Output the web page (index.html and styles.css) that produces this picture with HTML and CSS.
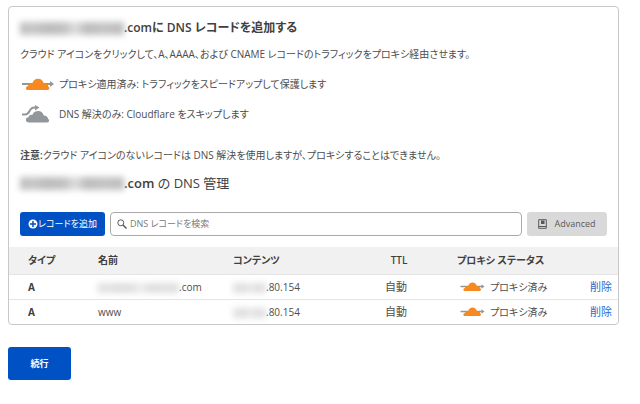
FILE: index.html
```html
<!DOCTYPE html>
<html lang="ja">
<head>
    <meta charset="UTF-8">
    <meta name="viewport" content="width=device-width, initial-scale=1.0">
    <title>DNS 管理</title>
    <link rel="stylesheet" href="styles.css">
</head>
<body>
    <!-- shared icons -->
    <svg class="sprite" aria-hidden="true">
        <symbol id="proxied" viewBox="0 0 32 12">
            <path d="M0 5h28V3l4 3-4 3V7H0z" fill="#92979b"/>
            <path d="M5.500 12C3.300 12 3.300 8.300 6 8 6.300 5.800 8.500 4.800 10.300 5.400 11 2.500 13.200.8 16 .8c3 0 5 1.900 5.700 4.400C24.500 5.200 26.200 6.500 26.400 8.800c1.500.7 1.200 3.200-.7 3.200z" fill="#f6891f"/>
        </symbol>
    </svg>

    <main class="page">
        <section class="card">
            <div class="intro">
                <h1 class="title"><span class="masked masked-title" aria-hidden="true"></span><span>.comに DNS レコードを追加する</span></h1>
                <p class="text">クラウド アイコンをクリックして、A、AAAA、および CNAME レコードのトラフィックをプロキシ経由させます。</p>
                <ul class="legend">
                    <li>
                        <svg class="legend-proxied" aria-hidden="true"><use href="#proxied"/></svg>
                        <span>プロキシ適用済み: トラフィックをスピードアップして保護します</span>
                    </li>
                    <li>
                        <svg class="legend-dns" viewBox="0 0 28 18" aria-hidden="true">
                            <path d="M0 9.500h3c2.500 0 3.400-1.200 4.400-3.200C8.700 3.600 10 2.500 12.500 2.500H14" fill="none" stroke="#92979b" stroke-width="2"/>
                            <path d="M13 0l4.500 2.500-4.500 3z" fill="#92979b"/>
                            <path d="M7 17.500c-4 0-4.300-4.700-.5-5.200.2-2 2-3 3.800-2.300C11.200 7.500 13.500 6 16 6c3 0 5.200 1.900 5.800 4.600 2.500.1 4 1.500 4.300 3.500 1.600.7 1.300 3.400-.9 3.400z" fill="#92979b"/>
                        </svg>
                        <span>DNS 解決のみ: Cloudflare をスキップします</span>
                    </li>
                </ul>
                <p class="text"><b>注意:</b>クラウド アイコンのないレコードは DNS 解決を使用しますが、プロキシすることはできません。</p>
                <h2 class="title subtitle"><span class="masked masked-title" aria-hidden="true"></span><span><b>.com</b> の DNS 管理</span></h2>
            </div>

            <form class="toolbar">
                <button type="button" class="btn btn-add">
                    <svg viewBox="0 0 10 10" width="10" height="10" aria-hidden="true">
                        <circle cx="5" cy="5" r="4.500" fill="#fff"/>
                        <path d="M5 2v6M2 5h6" stroke="#0051c3" stroke-width="1.500"/>
                    </svg>
                    <span>レコードを追加</span>
                </button>
                <div class="search">
                    <svg viewBox="0 0 10 10" width="10" height="10" aria-hidden="true">
                        <circle cx="3.800" cy="3.800" r="3" fill="none" stroke="#595959" stroke-width="1"/>
                        <path d="M6 6l3.500 3.500" stroke="#595959" stroke-width="1.500"/>
                    </svg>
                    <input type="search" placeholder="DNS レコードを検索" aria-label="DNS レコードを検索">
                </div>
                <button type="button" class="btn btn-advanced">
                    <svg viewBox="0 0 9 10" width="9" height="10" aria-hidden="true">
                        <path d="M.7.700h7.600v8.600H.7zM.7 7.500h7.600" fill="none" stroke="#595959" stroke-width="1"/>
                        <path d="M3 1.500h3.500v3.500H3z" fill="#595959"/>
                    </svg>
                    <span>Advanced</span>
                </button>
            </form>

            <table class="records">
                <colgroup>
                    <col class="col-type">
                    <col class="col-name">
                    <col class="col-content">
                    <col class="col-ttl">
                    <col class="col-proxy">
                    <col class="col-action">
                </colgroup>
                <thead>
                    <tr>
                        <th>タイプ</th>
                        <th>名前</th>
                        <th>コンテンツ</th>
                        <th class="ttl">TTL</th>
                        <th>プロキシ ステータス</th>
                        <td></td>
                    </tr>
                </thead>
                <tbody>
                    <tr>
                        <th>A</th>
                        <td><span class="masked masked-name" aria-hidden="true"></span>.com</td>
                        <td><span class="masked masked-ip" aria-hidden="true"></span>.80.154</td>
                        <td class="ttl">自動</td>
                        <td><span class="status"><svg aria-hidden="true"><use href="#proxied"/></svg>プロキシ済み</span></td>
                        <td class="action"><a href="#">削除</a></td>
                    </tr>
                    <tr>
                        <th>A</th>
                        <td>www</td>
                        <td><span class="masked masked-ip" aria-hidden="true"></span>.80.154</td>
                        <td class="ttl">自動</td>
                        <td><span class="status"><svg aria-hidden="true"><use href="#proxied"/></svg>プロキシ済み</span></td>
                        <td class="action"><a href="#">削除</a></td>
                    </tr>
                </tbody>
            </table>
        </section>

        <button type="button" class="btn btn-continue">続行</button>
    </main>
</body>
</html>
```
FILE: styles.css
```css
* { box-sizing: border-box; }
body {
    margin: 0;
    background: #fff;
    color: #4d4d4d;
    font: 10px/16px "Open Sans", "Noto Sans CJK JP", sans-serif;
    font-feature-settings: "palt";
}
h1, h2, p, ul { margin: 0; padding: 0; }
svg { flex: none; }
.sprite { display: block; width: 0; height: 0; }
.page { padding: 6px 21px 8px 8px; }

.card { border: 1px solid #c8c8c8; border-radius: 4px; overflow: hidden; }
.intro { padding: 11px 11px 0; }
.title { display: flex; align-items: center; color: #404040; font-size: 12px; line-height: 20px; font-weight: 600; }
.subtitle { margin-top: 10px; font-size: 13px; font-weight: 400; }
.text { margin-top: 8px; white-space: nowrap; }
b { font-weight: 600; }

.legend { list-style: none; margin: 14px 0 24px; display: grid; gap: 13px; }
.legend li { display: flex; align-items: center; gap: 5px; }
.legend-proxied { width: 32px; height: 12px; margin-left: 2px; }
.legend-dns { width: 28px; height: 18px; margin-left: 2px; }
.legend li + li { gap: 9px; }

/* hidden part of the domain and address */
.masked {
    display: inline-block;
    flex: none;
    vertical-align: middle;
    background: linear-gradient(90deg, #bcbcbc, #c8c8c8 12%, #bcbcbc 25%, #c0c0c0 42%, #dedede 53%, #bcbcbc 64%, #c4c4c4 82%, #bcbcbc);
    filter: blur(3px);
}
.masked-title { width: 104px; height: 13px; }
.masked-name { width: 81px; height: 10px; opacity: .5; }
.masked-ip { width: 33px; height: 10px; opacity: .5; }

.toolbar { display: flex; gap: 5px; padding: 19px 11px 11px; }
.btn {
    display: flex;
    align-items: center;
    justify-content: center;
    height: 24px;
    padding: 0 4px;
    border: 0;
    border-radius: 3px;
    font: inherit;
    font-size: 9px;
    font-feature-settings: inherit;
    white-space: nowrap;
    cursor: pointer;
}
.btn-add { width: 85px; background: #0051c3; color: #fff; }
.btn-advanced { width: 80px; gap: 7px; background: #d9d9d9; color: #595959; }
.btn-continue { width: 63px; height: 33px; margin-top: 22px; background: #0051c3; color: #fff; font-weight: 700; }

.search {
    flex: 1;
    min-width: 0;
    display: flex;
    align-items: center;
    gap: 3px;
    height: 24px;
    padding: 0 6px;
    border: 1px solid #a9a9a9;
    border-radius: 4px;
}
.search input { flex: 1; min-width: 0; padding: 0; border: 0; outline: 0; background: none; font: inherit; font-size: 9px; font-feature-settings: inherit; }
.search input::placeholder { color: #7a7a7a; opacity: 1; }

.records { width: 100%; table-layout: fixed; border-collapse: collapse; }
.records th, .records td { height: 25px; padding: 0; text-align: left; white-space: nowrap; }
.records th { color: #404040; font-weight: 700; }
.records thead th { height: 27px; font-weight: 600; }
.records th:first-child { padding-left: 19px; }
.records thead { background: #f1f1f1; }
.records tbody tr { border-top: 1px solid #e5e5e5; }
.col-type { width: 89px; }
.col-name { width: 135px; }
.col-content { width: 108px; }
.col-ttl { width: 116px; }
.col-action { width: 50px; }
.records .ttl { text-align: center; }
.records td.ttl { padding-right: 6px; }
.records .action { padding-right: 6px; text-align: right; }
.records td.ttl, .records .action { font-size: 11px; }
.action a { color: #2c67cf; text-decoration: none; }
.status { display: flex; align-items: center; gap: 5px; padding-left: 3px; }
.status svg { width: 25px; height: 9px; }
```
